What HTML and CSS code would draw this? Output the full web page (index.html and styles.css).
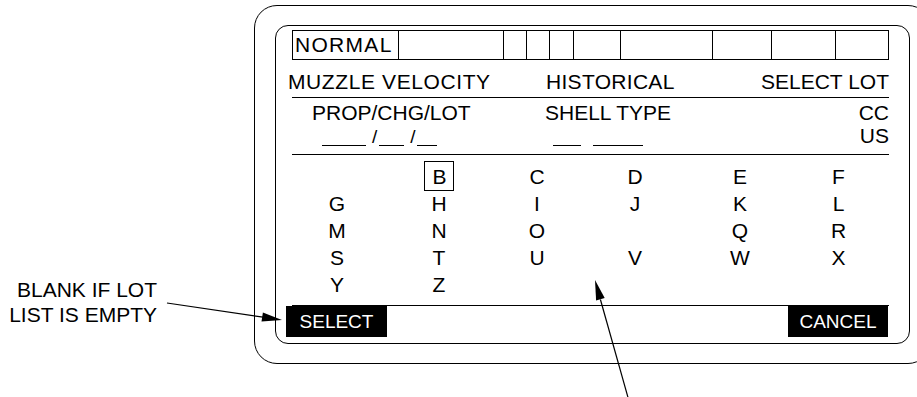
FILE: index.html
```html
<!DOCTYPE html>
<html>
<head>
<meta charset="utf-8">
<link rel="stylesheet" href="styles.css">
</head>
<body>
<div class="page">
  <div class="notes">
    <div class="callout">BLANK IF LOT<br>LIST IS EMPTY</div>
  </div>
  <div class="device">
    <div class="screen">
      <div class="status">
        <div class="cell c1">NORMAL</div>
        <div class="cell c2"></div>
        <div class="cell c3"></div>
        <div class="cell c4"></div>
        <div class="cell c5"></div>
        <div class="cell c6"></div>
        <div class="cell c7"></div>
        <div class="cell c8"></div>
        <div class="cell c9"></div>
        <div class="cell c10"></div>
      </div>
      <div class="row-title">
        <div class="t-left">MUZZLE VELOCITY</div>
        <div class="t-mid">HISTORICAL</div>
        <div class="t-right">SELECT LOT</div>
      </div>
      <div class="row-info">
        <div class="info-left">
          <div class="prop">PROP/CHG/LOT</div>
          <div class="fields prop-fields"><span class="blank b44"></span><span class="sl">/</span><span class="blank b25"></span><span class="sl">/</span><span class="blank b20"></span></div>
        </div>
        <div class="info-mid">
          <div>SHELL TYPE</div>
          <div class="fields shell-fields"><span class="blank b28"></span><span class="blank b50"></span></div>
        </div>
        <div class="info-right">
          <div>CC</div>
          <div>US</div>
        </div>
      </div>
      <div class="letters">
        <div class="lt"></div>
        <div class="lt"><span class="sel">B</span></div>
        <div class="lt">C</div>
        <div class="lt">D</div>
        <div class="lt">E</div>
        <div class="lt">F</div>
        <div class="lt">G</div>
        <div class="lt">H</div>
        <div class="lt">I</div>
        <div class="lt">J</div>
        <div class="lt">K</div>
        <div class="lt">L</div>
        <div class="lt">M</div>
        <div class="lt">N</div>
        <div class="lt">O</div>
        <div class="lt"></div>
        <div class="lt">Q</div>
        <div class="lt">R</div>
        <div class="lt">S</div>
        <div class="lt">T</div>
        <div class="lt">U</div>
        <div class="lt">V</div>
        <div class="lt">W</div>
        <div class="lt">X</div>
        <div class="lt">Y</div>
        <div class="lt">Z</div>
      </div>
      <div class="softkeys">
        <div class="key key-select">SELECT</div>
        <div class="key key-cancel">CANCEL</div>
      </div>
    </div>
  </div>
  <svg class="arrows" width="917" height="397" viewBox="0 0 917 397">
    <line x1="167" y1="303" x2="263" y2="317.2" stroke="#000" stroke-width="1.2"/>
    <polygon points="282,320 261.5,321.6 262.9,312.6" fill="#000"/>
    <line x1="629" y1="401" x2="600.4" y2="299.5" stroke="#000" stroke-width="1.2"/>
    <polygon points="595,280 604.7,298 596.1,300.4" fill="#000"/>
  </svg>
</div>
</body>
</html>
```
FILE: styles.css
```css
html, body {
  margin: 0;
  padding: 0;
  overflow: hidden;
  background: #fff;
}
body {
  font-family: "Liberation Sans", Arial, sans-serif;
  font-size: 21px;
  color: #000;
  width: 917px;
  height: 397px;
}
.page {
  position: relative;
  display: flex;
  padding-top: 5px;
  width: 917px;
  height: 397px;
  box-sizing: border-box;
}
.notes {
  width: 254px;
  flex: none;
}
.callout {
  margin-top: 272px;
  padding-right: 97px;
  text-align: right;
  line-height: 25px;
}
.device {
  flex: none;
  width: 677px;
  height: 359px;
  box-sizing: border-box;
  border: 1px solid #000;
  border-radius: 23px;
  padding: 19px 20px;
}
.screen {
  width: 635px;
  height: 319px;
  box-sizing: border-box;
  border: 1px solid #000;
  border-radius: 13px;
  padding-top: 4px;
}
.status {
  margin-left: 16px;
  width: 597px;
  height: 30px;
  box-sizing: border-box;
  border: 1px solid #000;
  display: grid;
  grid-template-columns: 105px 105px 23px 23px 24px 47px 92px 59px 64px 53px;
  line-height: 28px;
}
.cell {
  border-left: 1px solid #000;
}
.c1 {
  border-left: none;
  padding-left: 2px;
  letter-spacing: 1.3px;
  white-space: nowrap;
}
.row-title {
  margin-left: 16px;
  width: 597px;
  box-sizing: border-box;
  padding: 10px 0 3px;
  line-height: 24px;
  border-bottom: 1px solid #000;
  display: grid;
  grid-template-columns: 254px 1fr auto;
}
.t-left {
  margin-left: -4px;
  letter-spacing: 0.6px;
}
.t-mid {
  letter-spacing: 0.3px;
}
.row-info {
  margin-left: 16px;
  width: 597px;
  box-sizing: border-box;
  padding: 3px 0 7px;
  line-height: 23px;
  border-bottom: 1px solid #000;
  display: grid;
  grid-template-columns: 253px 1fr auto;
}
.prop {
  padding-left: 20px;
}
.info-right {
  text-align: right;
}
.fields {
  height: 23px;
  white-space: nowrap;
}
.prop-fields {
  padding-left: 30px;
}
.shell-fields {
  padding-left: 8px;
}
.blank {
  display: inline-block;
  height: 0;
  border-bottom: 1px solid #000;
  margin-bottom: -3px;
  vertical-align: baseline;
}
.b44 { width: 44px; }
.b25 { width: 25px; margin-left: 2px; }
.b20 { width: 20px; margin-left: 1px; }
.b28 { width: 28px; }
.b50 { width: 50px; margin-left: 12px; }
.sl {
  display: inline-block;
  font-size: 19px;
  margin-left: 6px;
}
.letters {
  margin-left: 16px;
  width: 597px;
  box-sizing: border-box;
  padding: 8px 0 7px;
  border-bottom: 1px solid #000;
  display: grid;
  grid-template-columns: 90px 114px 82px 114px 96px 101px;
  grid-auto-rows: 27px;
  line-height: 27px;
}
.lt {
  text-align: center;
}
.sel {
  display: inline-block;
  border: 1px solid #000;
  padding: 3px 6px 1px 7px;
  line-height: 24px;
  margin: -3px 0 -4px;
}
.softkeys {
  display: flex;
  justify-content: space-between;
  margin-left: 10px;
  margin-right: 21px;
  color: #fff;
  font-size: 19px;
  line-height: 31px;
}
.key {
  background: #000;
  text-align: center;
}
.key-select {
  width: 101px;
}
.key-cancel {
  width: 100px;
}
.arrows {
  position: absolute;
  left: 0;
  top: 0;
  pointer-events: none;
}
```
